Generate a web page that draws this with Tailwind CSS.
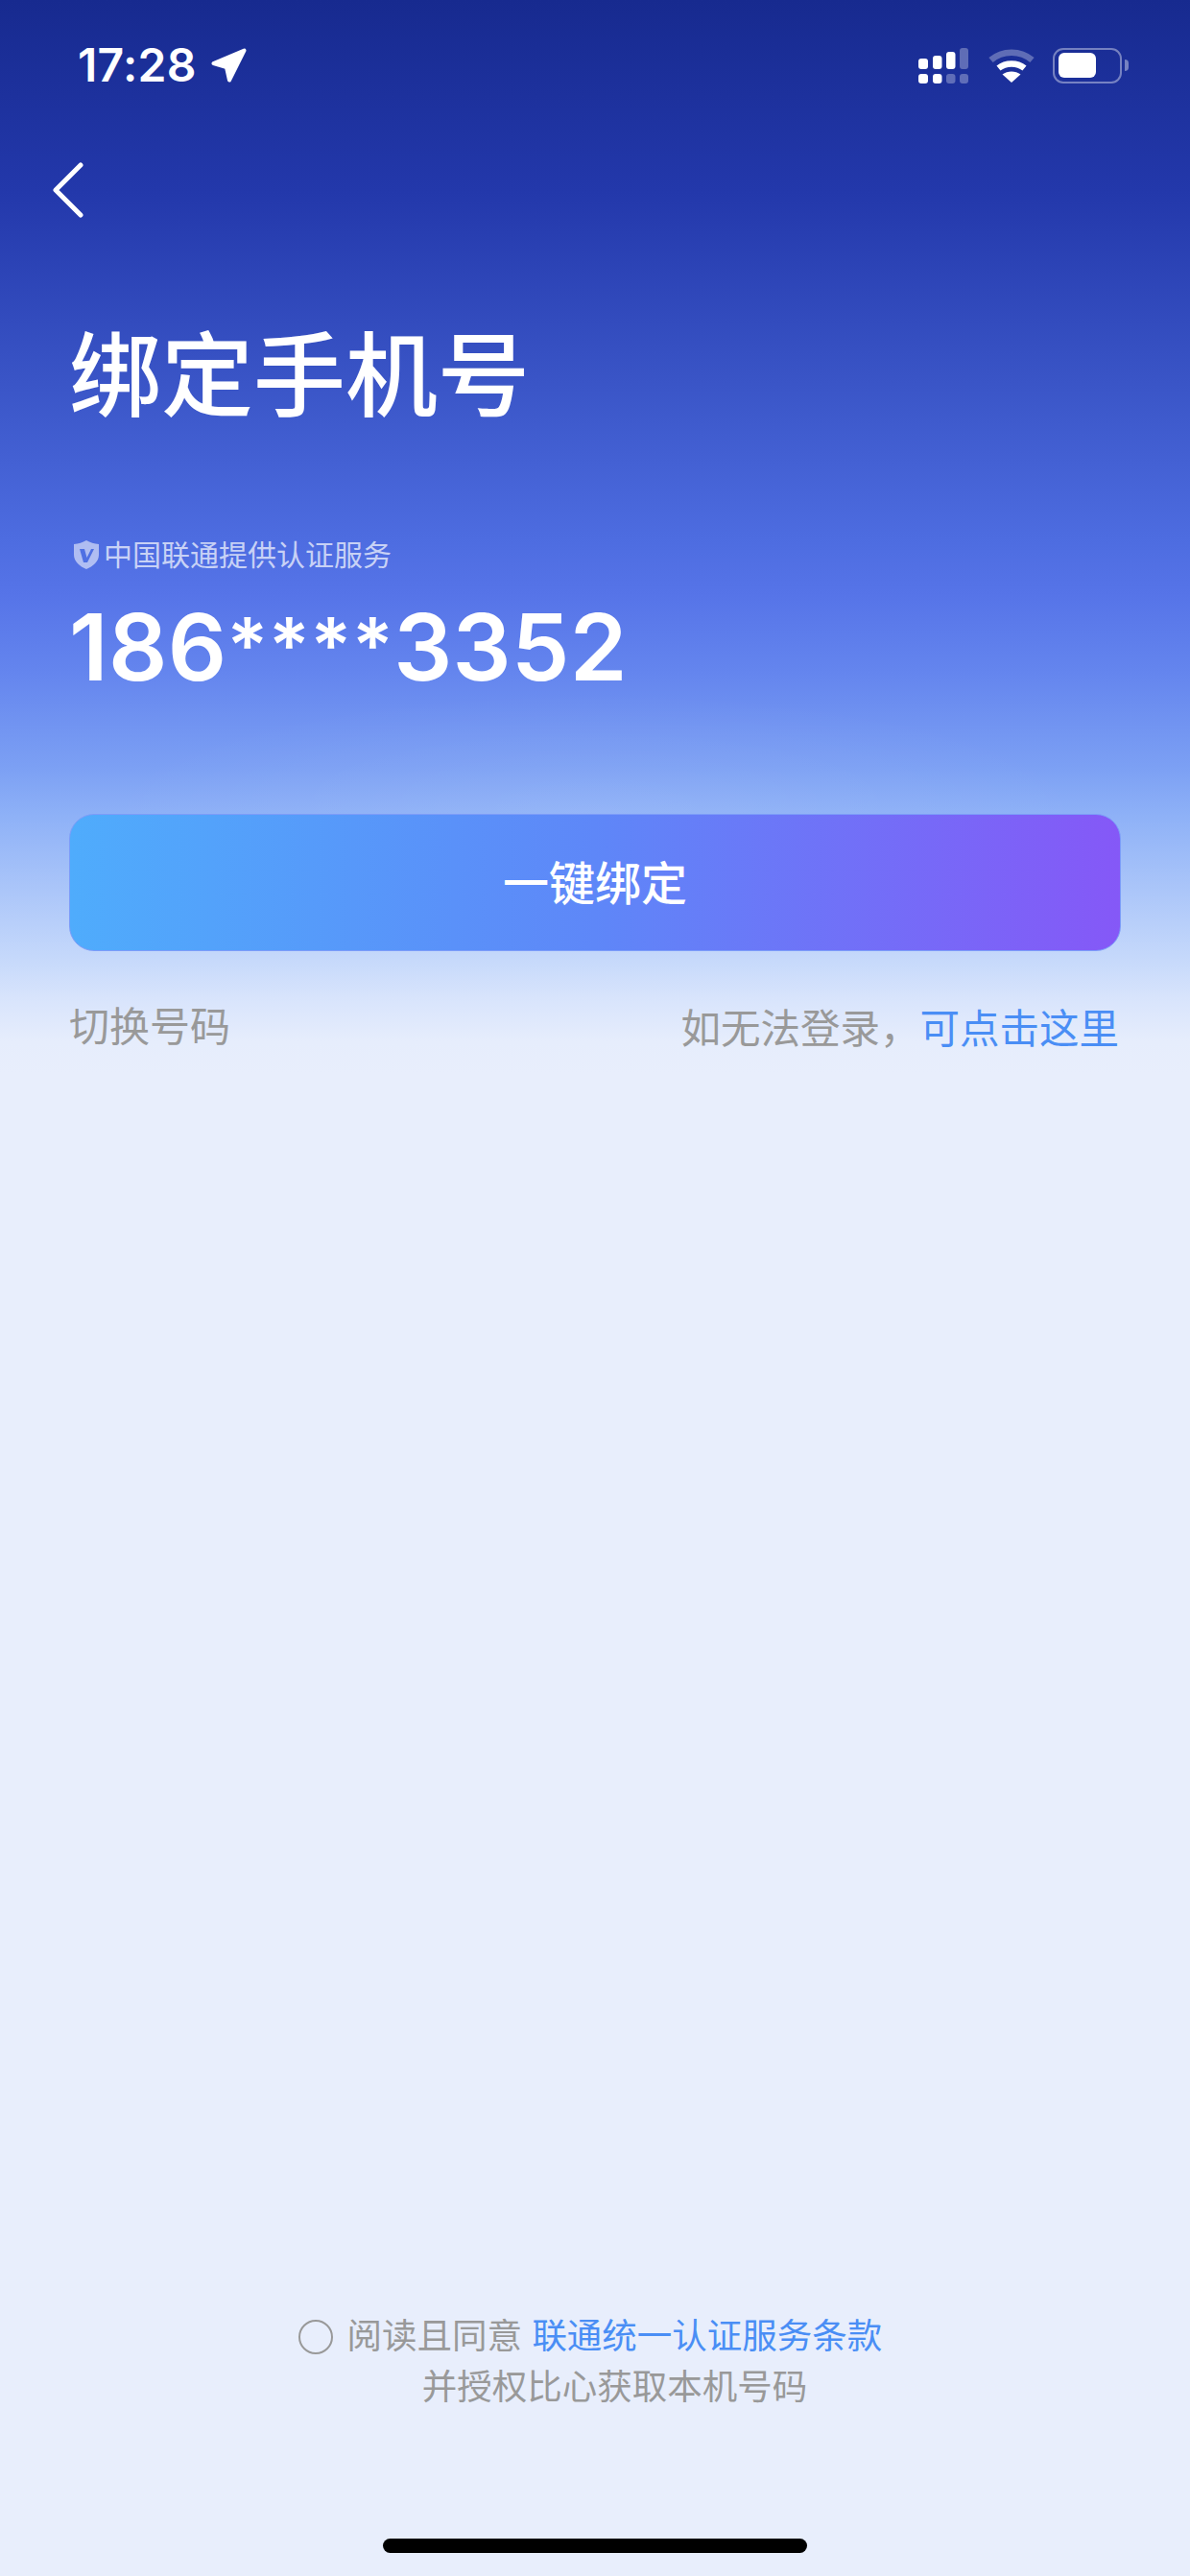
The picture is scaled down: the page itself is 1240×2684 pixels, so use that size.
<!DOCTYPE html>
<html lang="zh-CN">
<head>
  <meta charset="UTF-8" />
  <meta name="viewport" content="width=device-width, initial-scale=1.0"/>
  <title>绑定手机号</title>
  <script src="https://cdn.jsdelivr.net/npm/@tailwindcss/browser@4"></script>
</head>
<body class="bg-[#e8eefc]">
  <div class="w-[1240px] h-[2684px] flex flex-col overflow-hidden font-['Inter','Noto_Sans_CJK_SC',sans-serif] bg-[radial-gradient(ellipse_520px_130px_at_620px_850px,rgba(255,255,255,0.07),transparent),linear-gradient(180deg,#172a8f_0px,#2338ab_200px,#3a55c7_400px,#4d6ce0_560px,#5674e8_620px,#6485ee_700px,#7ca0f4_800px,#8eb1f7_850px,#c6d9fb_1000px,#d8e4fc_1040px,#e6edfc_1085px,#e8eefc_1120px,#e8eefc_2684px)]">

    <!-- status bar -->
    <div class="h-[136px] shrink-0 flex items-center justify-between pl-[81px] pr-[64px]">
      <div class="flex items-center gap-[14px]">
        <span class="text-[48px] leading-none font-semibold tracking-[0.3px] text-white">17:28</span>
        <svg class="w-[38px] h-[38px]" viewBox="0 0 38 38" fill="#fff" stroke="#fff" stroke-width="4" stroke-linejoin="round">
          <path d="M3.5 17 L35.5 3.5 L20 34.5 L17 21 Z"/>
        </svg>
      </div>
      <div class="flex items-center">
        <svg class="w-[52px] h-[37px]" viewBox="0 0 52 37" fill="#fff">
          <rect x="0" y="11" width="10" height="11" rx="3"/>
          <rect x="15" y="8" width="9.5" height="14" rx="3"/>
          <rect x="29" y="4" width="9.5" height="18" rx="3"/>
          <rect x="43" y="0" width="9" height="22" rx="3" opacity="0.3"/>
          <rect x="0" y="27" width="10" height="10" rx="3"/>
          <rect x="15" y="27" width="9.5" height="10" rx="3"/>
          <rect x="29" y="27" width="9.5" height="10" rx="3" opacity="0.3"/>
          <rect x="43" y="27" width="9" height="10" rx="3" opacity="0.3"/>
        </svg>
        <svg class="ml-[21px] w-[48px] h-[36px]" viewBox="0 0 48 36" fill="none" stroke="#fff">
          <path d="M2.5 12.5 C14.5 2 33.5 2 45.5 12.5" stroke-width="6.5" opacity="0.3"/>
          <path d="M10.5 21 C18 15 30 15 37.5 21" stroke-width="6.5"/>
          <path d="M24 36 L14.5 27.5 C20 23.5 28 23.5 33.5 27.5 Z" fill="#fff" stroke="none"/>
        </svg>
        <div class="ml-[19px] flex items-center gap-[3px]">
          <div class="w-[72px] h-[37px] rounded-[11px] border-[2.5px] border-white/40 p-[3.5px]">
            <div class="w-[39px] h-full rounded-[6px] bg-white"></div>
          </div>
          <div class="w-[4px] h-[12px] rounded-r-[4px] bg-white/40"></div>
        </div>
      </div>
    </div>

    <!-- back -->
    <div class="h-[124px] shrink-0 flex items-center pl-[55px]">
      <svg class="w-[32px] h-[58px]" viewBox="0 0 32 58" fill="none" stroke="#fff" stroke-width="5" stroke-linecap="round" stroke-linejoin="round">
        <path d="M29 3 L3 29 L29 55"/>
      </svg>
    </div>

    <div class="px-[72px] flex flex-col">
      <h1 class="mt-[87px] text-[96px] leading-[88px] font-medium text-white">绑定手机号</h1>

      <div class="mt-[123px] h-[40px] flex items-center gap-[5px] pl-[5px]">
        <svg class="w-[26px] h-[30px]" viewBox="0 0 26 30">
          <path d="M13 0 C17 2.5 21 3.5 26 4 V15 C26 22 20 27 13 30 C6 27 0 22 0 15 V4 C5 3.5 9 2.5 13 0 Z" fill="#fff" fill-opacity="0.55"/>
          <path d="M6 9 H11 L13.5 18 L18 9 H21 L14 23 H10 Z" fill="#4f70e3"/>
        </svg>
        <span class="text-[30px] leading-[40px] text-white/70">中国联通提供认证服务</span>
      </div>

      <div class="mt-[34px] h-[80px] text-[96px] leading-[80px] font-semibold tracking-[0.3px] text-white">186<span class="text-[80px] align-[8px]">****</span>3352</div>

      <button class="mt-[136px] h-[143px] w-full pt-[2px] rounded-[26px] border border-[#7c9cf9] bg-[linear-gradient(90deg,#4facfc,#5e87f8_50%,#8558f7)] text-[48px] font-medium text-white">一键绑定</button>

      <div class="mt-[56px] h-[50px] flex items-center justify-between pr-[2px] text-[41.5px] leading-[50px] text-[#999999]">
        <span class="mb-[4px] text-[42px]">切换号码</span>
        <span>如无法登录，<span class="text-[#4a8ef5]">可点击这里</span></span>
      </div>
    </div>

    <div class="flex-1"></div>

    <!-- agreement -->
    <div class="flex items-start justify-center gap-[15px] pr-[10px] text-[36.5px] leading-[53px] text-[#999999]">
      <div class="mt-[9px] w-[36px] h-[36px] rounded-full border-[2.5px] border-[#999999]"></div>
      <div class="text-center">
        <div>阅读且同意 <span class="text-[#4a8ef5]">联通统一认证服务条款</span></div>
        <div>并授权比心获取本机号码</div>
      </div>
    </div>

    <!-- home indicator -->
    <div class="mt-[131px] mb-[24px] mx-auto w-[442px] h-[15px] rounded-full bg-black"></div>
  </div>
</body>
</html>
